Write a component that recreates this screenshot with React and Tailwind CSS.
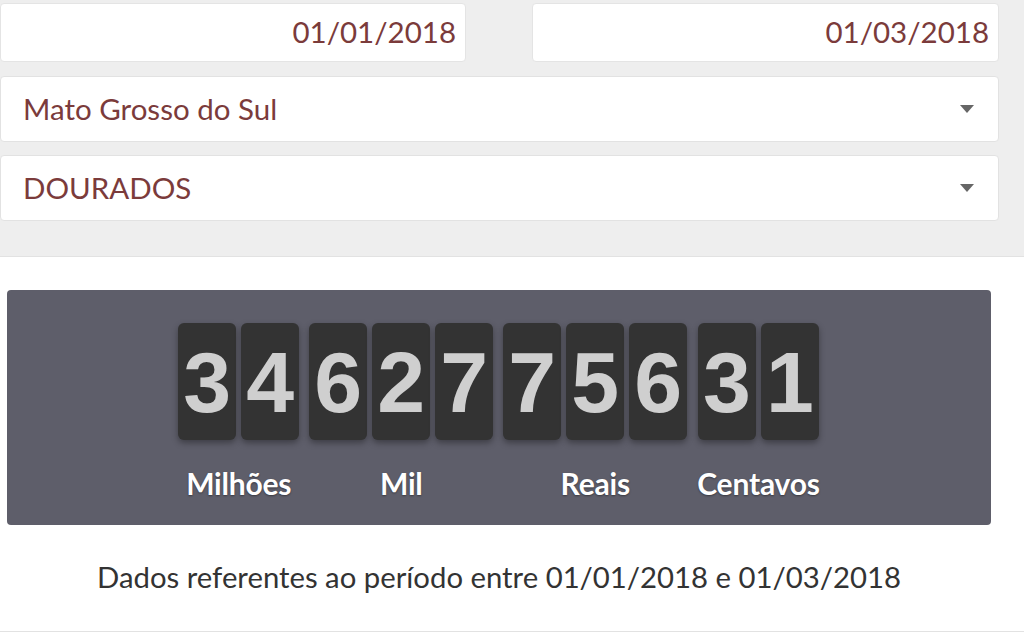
import React from 'react';

const groups = [
  { label: 'Milhões', digits: ['3', '4'] },
  { label: 'Mil', digits: ['6', '2', '7'] },
  { label: 'Reais', digits: ['7', '5', '6'] },
  { label: 'Centavos', digits: ['3', '1'] },
];

const Caret = () => (
  <svg width="14" height="8" viewBox="0 0 14 8" className="shrink-0">
    <path d="M0 0 L14 0 L7 8 Z" fill="#666" />
  </svg>
);

const App = () => {
  return (
    <div className="w-[1024px] h-[638px] overflow-hidden bg-white font-['Lato','Noto_Sans',sans-serif]">
      {/* filtros */}
      <div className="bg-[#eeeeee] pt-[3px] pr-[25px] h-[257px] border-b border-[#e2e2e2]">
        <div className="grid grid-cols-[466px_467px] gap-x-[66px]">
          <div className="h-[59px] bg-white rounded-[4px] border border-[#e4e4e4] flex items-center justify-end pr-[9px] text-[29.5px] text-[#7b3b3b]">
            01/01/2018
          </div>
          <div className="h-[59px] bg-white rounded-[4px] border border-[#e4e4e4] flex items-center justify-end pr-[9px] text-[29.5px] text-[#7b3b3b]">
            01/03/2018
          </div>
        </div>
        <div className="mt-[14px] h-[66px] bg-white rounded-[4px] border border-[#e2e2e2] flex items-center justify-between pl-[22px] pr-[24px] text-[29.5px] text-[#7b3b3b]">
          <span>Mato Grosso do Sul</span>
          <Caret />
        </div>
        <div className="mt-[13px] h-[66px] bg-white rounded-[4px] border border-[#e2e2e2] flex items-center justify-between pl-[22px] pr-[24px] text-[29.5px] text-[#7b3b3b]">
          <span>DOURADOS</span>
          <Caret />
        </div>
      </div>

      {/* contador */}
      <div className="pt-[33px] pl-[7px] w-[991px]">
        <div className="h-[235px] bg-[#5e5e6a] rounded-[4px] flex justify-center gap-[10px] pt-[33px]">
          {groups.map((g) => (
            <div key={g.label} className="flex flex-col items-center">
              <div className="flex gap-[5px]">
                {g.digits.map((d, i) => (
                  <div
                    key={i}
                    className="w-[58px] h-[117px] bg-[#333333] rounded-[6px] shadow-[0_3px_6px_rgba(0,0,0,0.35)] flex items-center justify-center font-['Liberation_Sans',Arial,sans-serif] font-bold text-[86px] leading-none text-[#cfcfcf]"
                  >
                    {d}
                  </div>
                ))}
              </div>
              <div className="mt-[28px] text-[30px] font-bold text-white leading-none tracking-[-0.2px] [text-shadow:0_1px_2px_rgba(0,0,0,0.4)]">
                {g.label}
              </div>
            </div>
          ))}
        </div>
        <p className="mt-[37px] text-center text-[29.3px] text-[#333333] leading-none">
          Dados referentes ao período entre 01/01/2018 e 01/03/2018
        </p>
      </div>
      <div className="mt-[40px] border-b border-[#e2e2e2]"></div>
    </div>
  );
};

export default App;
